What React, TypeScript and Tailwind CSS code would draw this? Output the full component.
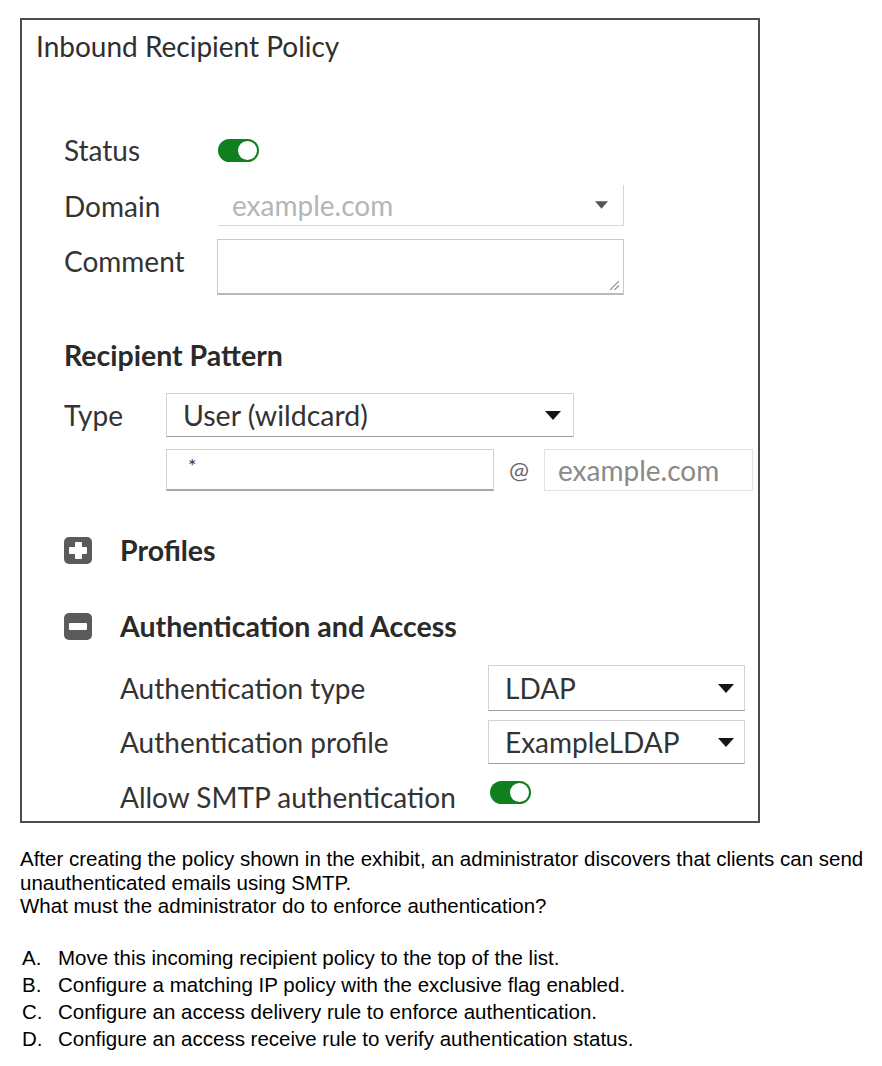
import type { ReactNode } from 'react';

const lato = { fontFamily: 'Lato, "Open Sans", sans-serif' };

function Toggle({ className = '' }: { className?: string }) {
  return (
    <div className={`relative h-[23px] w-[41px] rounded-full bg-[#10801f] ${className}`}>
      <div className="absolute right-[2px] top-[2px] h-[19px] w-[19px] rounded-full bg-white" />
    </div>
  );
}

function Caret() {
  return (
    <svg width="16" height="9" viewBox="0 0 16 9" className="shrink-0">
      <path d="M0 0 L16 0 L8 9 Z" fill="#151515" />
    </svg>
  );
}

function Select({ children, className }: { children: ReactNode; className: string }) {
  return (
    <div
      className={`flex items-center justify-between border border-[#d2d2da] border-b-[#a0a0a0] bg-white pl-[16px] ${className}`}
    >
      <span className="text-[#333]">{children}</span>
      <Caret />
    </div>
  );
}

function BoxIcon({ plus }: { plus?: boolean }) {
  return (
    <div className="relative h-[27px] w-[28px] rounded-[5px] bg-[#5b5b5b]">
      <div className="absolute left-[5px] top-[10px] h-[7px] w-[18px] rounded-[1px] bg-white" />
      {plus && <div className="absolute left-[10.5px] top-[5px] h-[17px] w-[7px] rounded-[1px] bg-white" />}
    </div>
  );
}

export default function App() {
  return (
    <div className="min-h-screen w-[882px] bg-white">
      <div className="pl-[20px] pt-[18px]">
        <div
          className="flex h-[805px] w-[740px] flex-col border-2 border-[#4d4d4d] text-[#333]"
          style={lato}
        >
          <h1 className="ml-[14px] mt-[9px] text-[28px] leading-[34px] text-[#2f2f2f]">
            Inbound Recipient Policy
          </h1>

          <div className="ml-[42px] mt-[67px] flex flex-col text-[28px] leading-[40px]">
            <div className="flex h-[40px] items-center">
              <span className="w-[154px]">Status</span>
              <Toggle />
            </div>
            <div className="mt-[15px] flex h-[41px] items-center">
              <span className="w-[154px]">Domain</span>
              <div className="flex h-full w-[406px] items-center justify-between border-b border-r border-[#d6d6e0] pl-[14px] pr-[15px] text-[#b5b5b5]">
                <span>example.com</span>
                <svg width="13" height="8" viewBox="0 0 16 9">
                  <path d="M0 0 L16 0 L8 9 Z" fill="#555" />
                </svg>
              </div>
            </div>
            <div className="mt-[13px] flex h-[56px] items-start">
              <span className="w-[153px] pt-[2px]">Comment</span>
              <div className="relative h-full w-[407px] border border-[#c8c8d2] border-b-2 border-b-[#b9b9b9]">
                <svg width="11" height="11" viewBox="0 0 10 10" className="absolute bottom-[2px] right-[3px]">
                  <path d="M1 9 L9 1 M5 9 L9 5" stroke="#888" strokeWidth="1" />
                </svg>
              </div>
            </div>

            <div className="mt-[42px] text-[28.5px] font-bold leading-[36px] text-[#2a2a2a]">Recipient Pattern</div>

            <div className="mt-[20px] flex h-[44px] items-center">
              <span className="w-[102px]">Type</span>
              <Select className="h-full w-[408px] pr-[12px] text-[28.5px]">User (wildcard)</Select>
            </div>
            <div className="mt-[12px] flex h-[42px] items-center">
              <div className="w-[102px]" />
              <div className="flex h-full w-[328px] items-start border border-[#d0d0d8] border-b-2 border-b-[#a8a8a8] pl-[21px] pt-[3px] text-[20px] leading-[24px] text-[#333]">
                *
              </div>
              <span className="ml-[15px] w-[35px] text-[24px] text-[#6a6a6a]">@</span>
              <div className="flex h-full w-[209px] items-center border border-[#e2e2e8] pl-[13px] text-[#8a8a8a]">
                example.com
              </div>
            </div>

            <div className="mt-[45px] flex h-[28px] items-center">
              <BoxIcon plus />
              <span className="ml-[28px] text-[28.5px] font-bold text-[#2a2a2a]">Profiles</span>
            </div>

            <div className="mt-[48px] flex h-[28px] items-center">
              <BoxIcon />
              <span className="ml-[28px] text-[28.5px] font-bold text-[#2a2a2a]">Authentication and Access</span>
            </div>

            <div className="ml-[56px] mt-[25px] flex h-[46px] items-center">
              <span className="w-[368px]">Authentication type</span>
              <Select className="h-full w-[257px] pr-[10px]">LDAP</Select>
            </div>
            <div className="ml-[56px] mt-[9px] flex h-[44px] items-center">
              <span className="w-[368px]">Authentication profile</span>
              <Select className="h-full w-[257px] pr-[10px]">ExampleLDAP</Select>
            </div>
            <div className="ml-[56px] mt-[13px] flex h-[40px] items-center">
              <span className="w-[370px]">Allow SMTP authentication</span>
              <Toggle className="mb-[10px]" />
            </div>
          </div>
        </div>
      </div>

      <div
        className="ml-[20px] mt-[24px] text-[20.5px] leading-[23.5px] text-black"
        style={{ fontFamily: '"Liberation Sans", Arial, sans-serif' }}
      >
        <p>After creating the policy shown in the exhibit, an administrator discovers that clients can send</p>
        <p>unauthenticated emails using SMTP.</p>
        <p>What must the administrator do to enforce authentication?</p>
        <ol className="mt-[26px] flex flex-col leading-[27px]">
          {[
            ['A.', 'Move this incoming recipient policy to the top of the list.'],
            ['B.', 'Configure a matching IP policy with the exclusive flag enabled.'],
            ['C.', 'Configure an access delivery rule to enforce authentication.'],
            ['D.', 'Configure an access receive rule to verify authentication status.'],
          ].map(([k, t]) => (
            <li key={k} className="flex">
              <span className="ml-[2px] w-[36px]">{k}</span>
              <span>{t}</span>
            </li>
          ))}
        </ol>
      </div>
    </div>
  );
}
